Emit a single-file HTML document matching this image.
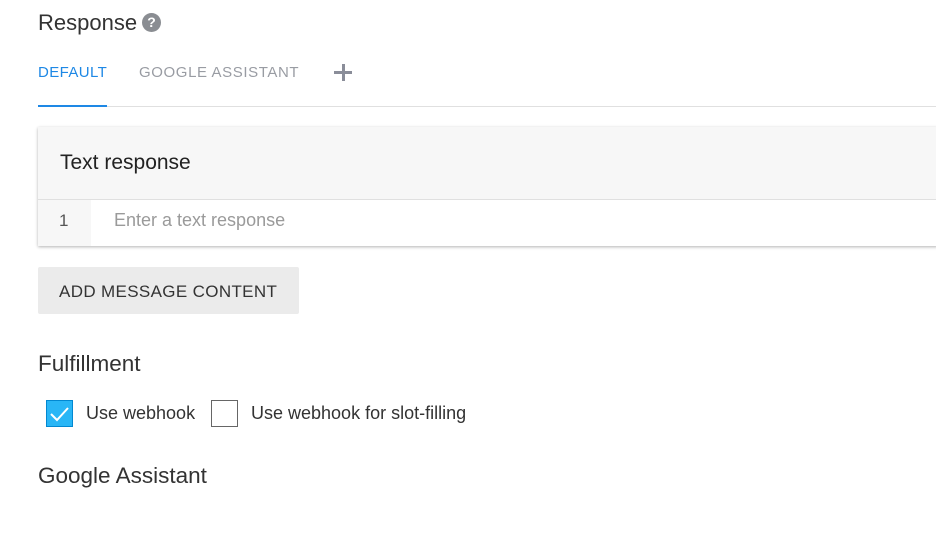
<!DOCTYPE html>
<html><head><style>
body{margin:0;width:936px;height:554px;background:#fff;font-family:"Liberation Sans",sans-serif;position:relative;overflow:hidden;color:#202124}
.a{position:absolute;white-space:nowrap}
</style></head><body>
<div class="a" style="left:38px;top:10px;font-size:22px;color:#333">Response</div>
<div class="a" style="left:142px;top:13px;width:19px;height:19px;border-radius:50%;background:#8a8d92;color:#fff;font-size:14px;font-weight:bold;text-align:center;line-height:19px">?</div>
<div class="a" style="left:38px;top:64px;font-size:15px;color:#1e88e5;letter-spacing:0.4px">DEFAULT</div>
<div class="a" style="left:139px;top:64px;font-size:15px;color:#999ca3;letter-spacing:0.6px">GOOGLE ASSISTANT</div>
<div class="a" style="left:334px;top:71px;width:18px;height:3px;background:#8a8d99"></div>
<div class="a" style="left:341.5px;top:64px;width:3px;height:17px;background:#8a8d99"></div>
<div class="a" style="left:38px;top:106px;width:898px;height:1px;background:#e0e0e0"></div>
<div class="a" style="left:38px;top:105px;width:69px;height:2px;background:#1e88e5"></div>
<div class="a" style="left:38px;top:127px;width:900px;height:119px;background:#f7f7f7;box-shadow:0 1px 3px rgba(0,0,0,.3)"></div>
<div class="a" style="left:60px;top:151px;font-size:21px;color:#222">Text response</div>
<div class="a" style="left:38px;top:199px;width:900px;height:1px;background:#e0e0e0"></div>
<div class="a" style="left:91px;top:200px;width:847px;height:46px;background:#fff"></div>
<div class="a" style="left:59px;top:211px;font-size:17px;color:#555">1</div>
<div class="a" style="left:114px;top:210px;font-size:18px;color:#9a9a9a">Enter a text response</div>
<div class="a" style="left:38px;top:267px;width:261px;height:47px;background:#ebebeb;border-radius:2px"></div>
<div class="a" style="left:59px;top:282px;font-size:17px;color:#333;letter-spacing:0.35px">ADD MESSAGE CONTENT</div>
<div class="a" style="left:38px;top:351px;font-size:22.5px;color:#333">Fulfillment</div>
<div class="a" style="left:46px;top:400px;width:27px;height:27px;background:#29b6f6;border:1px solid #0288d1;box-sizing:border-box"></div>
<svg class="a" style="left:46px;top:400px" width="27" height="27"><path d="M5 14 L11 20 L22 8" stroke="#fff" stroke-width="2" fill="none"/></svg>
<div class="a" style="left:86px;top:403px;font-size:18px;color:#333">Use webhook</div>
<div class="a" style="left:211px;top:400px;width:27px;height:27px;border:1.5px solid #666;box-sizing:border-box"></div>
<div class="a" style="left:251px;top:403px;font-size:18px;color:#333">Use webhook for slot-filling</div>
<div class="a" style="left:38px;top:463px;font-size:22.5px;color:#333">Google Assistant</div>
</body></html>
